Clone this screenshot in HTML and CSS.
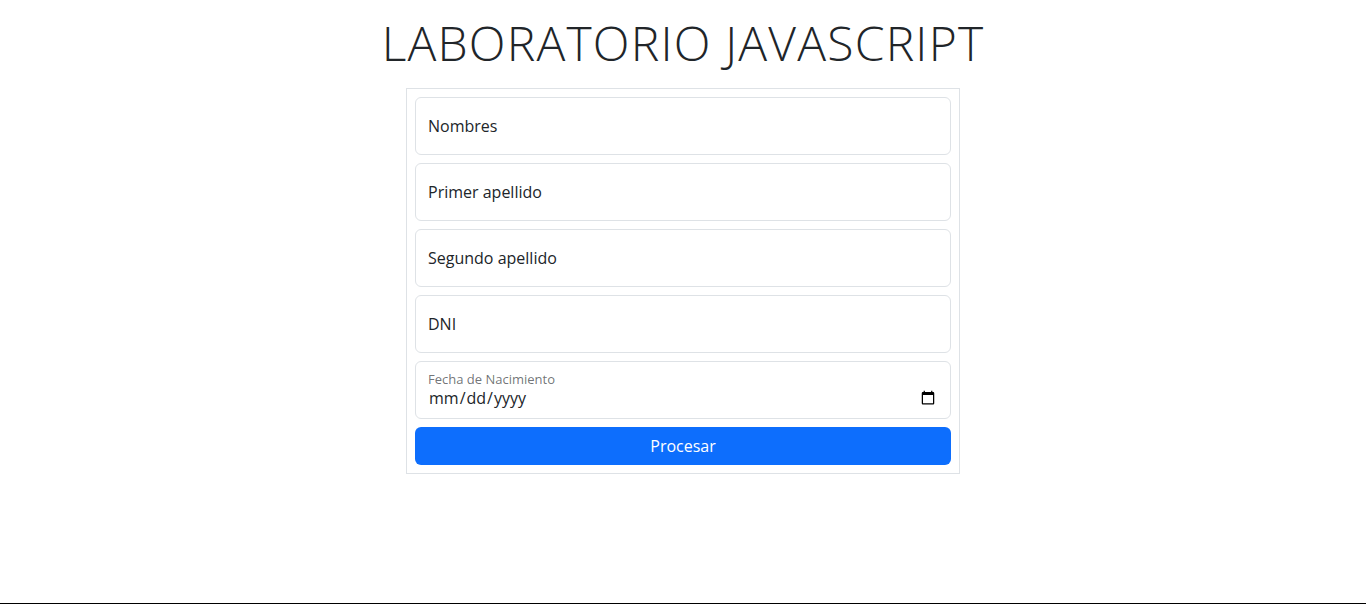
FILE: index.html
```html
<!DOCTYPE html>
<html lang="es">
<head>
<meta charset="utf-8">
<title>Laboratorio JavaScript</title>
<link rel="stylesheet" href="styles.css">
</head>
<body>
<main class="page">
  <h1 class="title">LABORATORIO JAVASCRIPT</h1>
  <form class="card">
    <div class="field"><input class="control" type="text" placeholder="Nombres"></div>
    <div class="field"><input class="control" type="text" placeholder="Primer apellido"></div>
    <div class="field"><input class="control" type="text" placeholder="Segundo apellido"></div>
    <div class="field"><input class="control" type="text" placeholder="DNI"></div>
    <div class="field field-date">
      <label class="float-label" for="fecha">Fecha de Nacimiento</label>
      <input class="control date" id="fecha" type="date">
    </div>
    <button class="btn" type="button">Procesar</button>
  </form>
</main>
<footer class="bottom"></footer>
</body>
</html>
```

FILE: styles.css
```css
* { box-sizing: border-box; }
html, body { height: 100%; }
body {
  margin: 0;
  font-family: "Open Sans", "Noto Sans", sans-serif;
  color: #212529;
  background: #fff;
  display: flex;
  flex-direction: column;
  min-height: 100vh;
}
.page {
  display: flex;
  flex-direction: column;
  align-items: center;
}
.title {
  margin: 14px 0 16px;
  font-size: 48px;
  font-weight: 300;
  line-height: 1.2;
  letter-spacing: 1.2px;
}
.card {
  width: 554px;
  border: 1px solid #dee2e6;
  padding: 8px;
  display: flex;
  flex-direction: column;
  gap: 8px;
}
.field {
  height: 58px;
  border: 1px solid #dee2e6;
  border-radius: 6px;
  display: flex;
  flex-direction: column;
  justify-content: center;
}
.control {
  border: 0;
  outline: 0;
  background: transparent;
  font-family: inherit;
  font-size: 16px;
  color: #212529;
  padding: 0 12px;
  width: 100%;
}
.control::placeholder { color: #212529; opacity: 1; }
.field-date { justify-content: flex-start; padding-top: 9px; }
.float-label {
  font-size: 13px;
  color: rgba(33,37,41,.65);
  padding: 0 12px;
  line-height: 16px;
}
.date { line-height: 20px; height: 22px; padding-right: 12px; }
.btn {
  height: 38px;
  border: 0;
  border-radius: 6px;
  background: #0d6efd;
  color: #fff;
  font-family: inherit;
  font-size: 16px;
}
.bottom {
  margin-top: auto;
  border-top: 1px solid #000;
}
```
